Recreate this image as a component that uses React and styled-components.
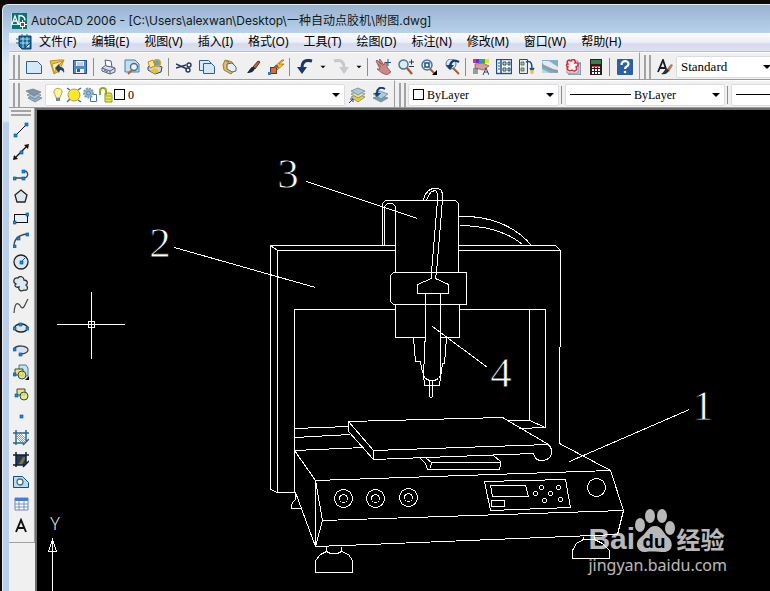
import React from "react";
import styled, { createGlobalStyle, css } from "styled-components";

const GlobalStyle = createGlobalStyle`
  * { box-sizing: border-box; }
  body { margin: 0; background: #0d0a07; font-family: "Inter", "Noto Sans CJK SC", sans-serif; }
  button, select { font: inherit; color: inherit; margin: 0; }
`;

const Desktop = styled.div`
  min-height: 100vh;
  padding: 4px 0 0 2px;
  display: flex;
  overflow: hidden;
`;

const AppWindow = styled.main`
  flex: 1;
  min-width: 0;
  display: flex;
  flex-direction: column;
  overflow: hidden;
  border-top: 1px solid #e4eef8;
  border-left: 1px solid #e4eef8;
  border-top-left-radius: 6px;
  background: linear-gradient(#99b4d1 0, #b9d1ea 28px, #dfe9f5 60px, #dfe9f5 116px, #bad0ea 118px);
`;

const TitleBar = styled.header`
  display: flex;
  align-items: center;
  gap: 4px;
  height: 28px;
  padding: 3px 8px 0;
  color: #101820;
  white-space: nowrap;
`;

const Title = styled.h1`
  margin: 0;
  font-size: 12px;
  font-weight: 400;
  line-height: 18px;
`;

const Client = styled.div`
  flex: 1;
  display: flex;
  flex-direction: column;
  min-width: 0;
  margin-left: 6px;
  background: #f0f0f0;
`;

const MenuBar = styled.nav`
  display: flex;
  align-items: center;
  height: 19px;
  padding-left: 7px;
  font-family: "Noto Sans", "Noto Sans CJK SC", sans-serif;
  background: linear-gradient(#fdfdff, #eceff8 50%, #d5dbee 60%, #dde2f2);
  border-bottom: 1px solid #b8bdcc;
`;

const MenuItem = styled.button`
  border: 0;
  padding: 0 8px 0 7px;
  background: none;
  font-size: 12px;
  line-height: 18px;
  color: #000;
  white-space: nowrap;
`;

const ToolRow = styled.div`
  display: flex;
  height: 28px;
  overflow: hidden;
`;

const Toolbar = styled.div`
  display: flex;
  align-items: center;
  flex: ${(p) => (p.$grow ? "1" : "none")};
  min-width: 0;
  height: 28px;
  padding: ${(p) => (p.$grow ? "1px 0 0 4px" : "1px 3px 0 4px")};
  border-top: 1px solid #fff;
  border-bottom: 1px solid #9c9c9c;
  border-right: ${(p) => (p.$grow ? "0" : "1px solid #9c9c9c")};
`;

const Grip = styled.span`
  flex: none;
  width: 7px;
  height: 24px;
  margin-right: 2px;
  border: solid #a3a3a3;
  border-width: 0 2px;
  ${(p) =>
    p.$horizontal &&
    css`
      width: 20px;
      height: 6px;
      margin: 0 0 3px;
      border-width: 2px 0;
    `}
`;

const ToolButton = styled.button`
  flex: none;
  display: flex;
  align-items: center;
  justify-content: center;
  width: ${(p) => (p.$narrow ? "13px" : "23px")};
  height: 22px;
  padding: 0;
  border: 0;
  background: none;
`;

const Divider = styled.span`
  flex: none;
  width: 2px;
  height: 18px;
  margin: 0 2px;
  border-left: 1px solid #8d8d8d;
`;

const ComboBox = styled.label`
  flex: ${(p) => (p.$width ? "none" : "1 0 60px")};
  display: flex;
  align-items: center;
  width: ${(p) => (p.$width ? p.$width + "px" : "auto")};
  height: 22px;
  padding: 0 0 0 4px;
  background: #fff;
  border: 1px solid #d9dce0;
  border-radius: 2px;
  overflow: hidden;
`;

const ComboSelect = styled.select`
  flex: 1;
  min-width: 0;
  appearance: none;
  border: 0;
  padding: 0;
  margin-left: ${(p) => (p.$plain ? "0" : "3px")};
  background: transparent;
  outline: 0;
  color: #000;
  font-family: "Liberation Serif", serif;
  font-size: ${(p) => (p.$plain ? "13px" : "12px")};
  line-height: 18px;
`;

const Swatch = styled.span`
  flex: none;
  width: 11px;
  height: 11px;
  border: 1px solid #000;
  background: #fff;
`;

const LineSample = styled.span`
  flex: none;
  width: 61px;
  height: 1px;
  background: #000;
`;

const Workspace = styled.div`
  flex: 1;
  display: flex;
`;

const DrawPanel = styled.aside`
  flex: none;
  width: 26px;
  background: #f0f0f0;
`;

const DrawTools = styled.div`
  display: flex;
  flex-direction: column;
  align-items: center;
  padding: 2px 1px 5px 0;
  border-right: 1px solid #a0a0a0;
  border-bottom: 1px solid #a0a0a0;
`;

const Canvas = styled.section`
  position: relative;
  flex: 1;
  min-width: 0;
  overflow: hidden;
  background: #000;
  border-top: 2px solid #6c6c6c;
  border-left: 2px solid #6c6c6c;
`;

const Drawing = styled.svg`
  display: block;
  fill: none;
  stroke: #fff;
  stroke-width: 1;
  shape-rendering: crispEdges;
`;

const Callout = styled.text`
  fill: #fff;
  stroke: #000;
  stroke-width: 0.8;
  font-family: "Liberation Serif", serif;
  font-size: 43px;
  text-anchor: middle;
`;

const AxisLabel = styled.text`
  fill: #fff;
  stroke: none;
  font-family: "Open Sans", sans-serif;
  font-weight: 300;
  font-size: 18px;
  text-anchor: middle;
`;

const Watermark = styled.div`
  position: absolute;
  right: 43px;
  bottom: 15px;
  color: #fff;
  opacity: 0.72;
`;

const Brand = styled.div`
  display: flex;
  align-items: flex-end;
  height: 46px;
`;

const BrandLatin = styled.span`
  width: 46px;
  font-family: "Liberation Sans", sans-serif;
  font-weight: 700;
  font-size: 30px;
  line-height: 31px;
`;

const BrandHan = styled.span`
  font-family: "Noto Sans CJK SC", sans-serif;
  font-weight: 700;
  font-size: 24px;
  line-height: 31px;
  white-space: nowrap;
`;

const Address = styled.div`
  font-family: "Noto Sans", sans-serif;
  font-size: 16px;
  line-height: 22px;
`;

const B = "#1b4f8f";
const Node = ({ x, y }) => <rect x={x - 1} y={y - 1} width="3" height="3" fill="#0a8cf0" stroke="#07508f" strokeWidth=".6" />;

const glyphs = {
  app: <><rect width="16" height="16" fill="#08746c" /><path d="M.5 0v16M0 11.500h16" stroke="#e8ffff" strokeWidth=".8" /><path d="M1 11 4 3l3 8M2 8h4M8 2v9M8 2.500c4 0 6 2 6 5" stroke="#fff" strokeWidth="1.300" fill="none" /><path d="M7 11.500h9M11.500 7v9" stroke="#fff" /><rect x="9.500" y="9.500" width="4" height="4" fill="#08746c" stroke="#fff" /></>,
  doc: <><path d="M3 2v10l3 3h9V2z" fill="#126a9c" stroke="#0d3d61" /><path d="M0 5h3M0 9h3M6 0v3M11 0v3" stroke="#17648d" /><path d="M4 5h10M4 9h10M7 3v11M11 3v11" stroke="#d8f3ff" strokeWidth=".8" /><path d="m9 14 5-5v5z" fill="#c8edff" stroke="#174d76" /></>,
  page: <path d="M.5 2.500h11l4 4v8H.5z" fill="#d4e8f5" stroke="#2c6389" />,
  open: <><path d="m1 2 9-1 5 0-5 11-5 3z" fill="#f4c63c" stroke="#bd8c22" /><path d="m3 5 11-3-6 6-3 6z" fill="#fff0a0" stroke="#c39025" /><path d="m6 9 4-4 1 3c3 0 5 2 4 6-1-2-2-3-4-3l-1 3z" fill="#22436e" /></>,
  save: <><rect x="1.500" y="1.500" width="13" height="13" fill="#578ac6" stroke="#244f8b" /><path d="M4 2h8v5H4zM4 10h8v4H4z" fill="#edf3fa" /><path d="M5 4h6M5 6h6" stroke="#9aafc8" /><path d="M5 10h3v3H5z" fill="#315e9b" /></>,
  print: <><path d="m1 9 4-3 9 3v4l-5 2-8-3z" fill="#d9deeb" stroke="#59617b" /><path d="m4 1 6 1 1 6-6-1z" fill="#fff" stroke="#555e77" /><path d="m1 9 8 3 5-3M9 12v3M3 11l4 2" fill="none" stroke="#59617b" /></>,
  preview: <><path d="M1 1h10l4 4v8H1z" fill="#c4dfef" stroke="#477fa8" /><circle cx="10" cy="8" r="3.500" fill="#e2f3fb" stroke="#506f87" strokeWidth="1.400" /><path d="m8 11-4 4" stroke="#b76137" strokeWidth="2" /></>,
  publish: <><path d="m1 8 6-3 8 3-1 5-6 2-7-4z" fill="#c9d1e4" stroke="#38435e" /><circle cx="10" cy="4" r="3.500" fill="#65a6bd" stroke="#e1a71b" strokeWidth="1.500" /><path d="m1 3 5-2 2 6-5 2z" fill="#ffe884" stroke="#b88822" /><path d="m3 12 5-3 4 3-4 3z" fill="#e9c329" /></>,
  cut: <g fill="none" stroke="#253960" strokeWidth="1.400"><path d="m0 5 11 5M0 9l10-3" /><circle cx="13" cy="6" r="2" /><circle cx="12" cy="11" r="2" /></g>,
  copy: <><path d="M.5 1.500h9l3 3v7H.5z" fill="#d8eaf5" stroke="#286289" /><path d="M4.500 4.500h8l3 3v7h-11z" fill="#d4e8f4" stroke="#286289" /></>,
  paste: <><path d="m3 1 7 2 4 6-5 6-7-4-1-5z" fill="#e4bd5c" stroke="#a5782b" /><path d="m5 5 5-1 4 4v4l-4 1-5-3z" fill="#e5eff6" stroke="#426c8c" /><path d="m4 1 4 1-1 2-3-1z" fill="#9a836a" /></>,
  brush: <><path d="m8 8 5-6 2 1-5 7z" fill="#b0703c" stroke="#50311f" /><path d="M9 8c-3-1-4 3-7 6 4 0 7-1 8-5z" fill="#202633" /></>,
  block: <><rect x="2.500" y="8.500" width="6" height="6" fill="#e6682a" stroke="#31465d" /><path d="m14 1-8 7h5l-3 4 8-7h-5l5-4z" fill="#ffc619" stroke="#9f5b13" strokeWidth=".7" /><path d="M0 13h3v3H0zM7 6h3v3H7z" fill="#3d78bc" /></>,
  undo: <><path d="M15 2C8 0 5 3 5 9" fill="none" stroke="#173967" strokeWidth="3" /><path d="M0 8h10l-5 7z" fill="#173967" /></>,
  redo: <><path d="M1 2c7-2 10 1 10 7" fill="none" stroke="#c6c9cd" strokeWidth="3" /><path d="M6 8h10l-5 7z" fill="#c6c9cd" /></>,
  pan: <><path d="M1 2 2 1l4 4-2-4 1-1 4 6 1-3 2 1 0 4 4 5-4 3-5-2-5-4 3 0z" fill="#c98a86" stroke="#8e5056" strokeWidth=".8" /><path d="m3 5 3 3M6 4l2 3" stroke="#8e5056" strokeWidth=".7" /><path d="M13 0v7M10 3.500h6" stroke="#185894" fill="none" /></>,
  zoom: <><circle cx="5.500" cy="5.500" r="4.500" fill="#d6edf7" stroke="#53748c" strokeWidth="1.500" /><path d="m9 9 5 6" stroke="#a75b30" strokeWidth="2.400" /><path d="M11 3h5M13.500.500v5M11 7.500h5" stroke="#23395a" /></>,
  zoomWindow: <><circle cx="6" cy="6" r="5" fill="#d6edf7" stroke="#53748c" strokeWidth="1.500" /><path d="m9 10 5 5" stroke="#a75b30" strokeWidth="2" /><rect x="4" y="4" width="4" height="4" fill="#fff" stroke="#1b4f8f" strokeWidth="1.500" /><path d="M16 11v5h-5z" fill="#000" /></>,
  zoomPrevious: <><circle cx="7" cy="5" r="5" fill="#d6edf7" stroke="#53748c" /><path d="m9 9 6 6" stroke="#a75b30" strokeWidth="2" /><path d="M15 3c-5-3-8-1-9 4" fill="none" stroke="#183c70" strokeWidth="2.400" /><path d="M2 6h8l-4 5z" fill="#183c70" /></>,
  properties: <><path d="M0 0h3v4H0z" fill="#f0218b" /><path d="M3 0h3v4H3z" fill="#6b2ae2" /><path d="M6 0h3v4H6z" fill="#149ee6" /><path d="M9 0h3v4H9z" fill="#20b93c" /><path d="M12 0h4v4h-4z" fill="#f2db29" /><path d="m2 5 8-1 6 3-6 4-8-2z" fill="#db9a94" stroke="#884e50" strokeWidth=".7" /><path d="M0 10h5M0 12h5M0 14h5M10 16l3-7 3 7m-5-3h4" fill="none" stroke="#34465d" /></>,
  center: <><rect x=".5" y=".5" width="15" height="14" fill="#fff" stroke={B} strokeWidth="1.400" /><path d="M5 1v13" stroke={B} strokeWidth="1.500" /><path d="M2 4h2M2 7h2M2 10h2" stroke={B} /><path d="M7 3h3v3H7zm5 0h2v3h-2zM7 9h3v3H7zm5 0h2v3h-2z" fill="#f2d454" stroke={B} /></>,
  palette: <><path d="M.5.500h8v14h-8z" fill="#dfedf8" stroke={B} /><path d="M2 3h3v3H2zm0 6h3v3H2z" fill="#e9b935" stroke="#285078" strokeWidth=".7" /><path d="M7 3c6-2 6 3 6 8m-2-2 2 3 2-3" fill="none" stroke={B} strokeWidth="1.500" /><circle cx="13" cy="13" r="2" fill="#e8c447" /></>,
  sheet: <><path d="M0 1h16v13H0z" fill="#7fb0cb" /><path d="M0 2h7l9 6v5l-5-1-9-5z" fill="#e4ebed" /><path d="m0 5 11 5 5 1v3L8 12 0 8z" fill="#8c9ca6" /><path d="m0 10 8 4H0z" fill="#b9d8e6" /></>,
  markup: <><path d="M4 4h12v12H4z" fill="#b9c5d8" stroke="#65758f" /><path d="M2 2h11v12H2z" fill="#fff" stroke="#8995aa" /><path d="M3 5c-2-3 1-5 3-3 2-3 5-1 4 2 4-1 4 3 1 4 2 4-2 5-4 3-3 2-6-1-4-3-2-1-2-3 0-3z" fill="#fff4f4" stroke="#e62735" strokeWidth="1.500" /></>,
  calc: <><rect x="2" width="12" height="16" fill="#242020" /><rect x="3" y="1" width="10" height="4" fill="#377e4d" /><path d="M4 7h2v2H4zm3 0h2v2H7zm3 0h2v2h-2zM4 10h2v2H4zm3 0h2v2H7zm3 0h2v2h-2zM4 13h2v2H4zm3 0h2v2H7zm3 0h2v2h-2z" fill="#fff" /><path d="M4 7h8v1H4z" fill="#ed363d" /></>,
  help: <><rect width="16" height="16" rx="1" fill="#2c609e" /><path d="M4.500 6c0-5 7-5 7-1 0 3-3.500 2-3.500 5" fill="none" stroke="#fff" strokeWidth="2.200" /><circle cx="8" cy="13" r="1.300" fill="#fff" /></>,
  style: <><path d="M1 13 6 1l4 12M3 9h6" fill="none" stroke="#161c26" strokeWidth="1.800" /><path d="m9 11 5-6 2 1-4 7z" fill="#bb7c4a" /><path d="M10 10c-3 0-3 4-6 5 5 1 7-1 8-4z" fill="#26313b" /></>,
  layers: <g stroke="#687a8d" strokeWidth=".7"><path d="m2 11 6-3 8 3-7 4z" fill="#8fb0c6" /><path d="m1 8 7-3 7 3-6 4z" fill="#a9c2d2" /><path d="m0 4 7-2 8 3-7 4z" fill="#8494a3" /></g>,
  layerCurrent: <><g stroke="#657d90" strokeWidth=".7"><path d="m2 10 7-3 7 3-7 5z" fill="#eccc31" /><path d="m2 7 7-3 7 3-7 4z" fill="#e6e29a" /><path d="m2 4 7-3 7 3-7 4z" fill="#a9c9db" /></g><path d="m0 16 4-4M1 12h3v3" fill="none" stroke="#174883" /></>,
  layerPrevious: <><g stroke="#657d90" strokeWidth=".7"><path d="m1 11 7-3 8 3-7 4z" fill="#7e9cb0" /><path d="m1 7 7-3 8 3-7 5z" fill="#aacbdd" /></g><path d="M13 2C8-1 5 2 5 6" fill="none" stroke="#193e6f" strokeWidth="2" /><path d="M2 6h7l-4 4z" fill="#193e6f" /></>,
  bulb: <><path d="M6 11c0-3-2-3-2-6 0-5 8-5 8 0 0 3-2 3-2 6z" fill="#fff5a8" stroke="#bd9c24" /><path d="M6 11h4v3H6z" fill="#7086a8" /></>,
  sun: <><path d="m1 1 3 2m8 10 3 2M1 15l3-3m8-9 3-2" stroke="#3271ae" strokeWidth="1.500" /><circle cx="8" cy="8" r="6" fill="#fde72d" stroke="#b19b34" /></>,
  viewport: <><path d="M8.500 7.500h6v7h-6z" fill="#fff" stroke="#407bad" /><circle cx="6.500" cy="6" r="4.500" fill="#9fbdd2" stroke="#7c9bb5" strokeDasharray="2 1" strokeWidth="2" /><circle cx="6.500" cy="6" r="2" fill="none" stroke="#5984a4" /></>,
  lock: <><path d="M7 6h6l1 2v7H7z" fill="#efed45" stroke="#8d9520" /><path d="M8 9h5M8 12h5" stroke="#9ca231" /><path d="M2 8V4c0-4 6-4 6 0v4" fill="none" stroke="#97a822" strokeWidth="2" /></>,
  arrow: <path d="M4 6h8l-4 4z" fill="#000" />,
  line: <><path d="m2 14 12-12" stroke="#111" /><Node x="2" y="13" /><Node x="13" y="2" /></>,
  ray: <><path d="M2 14 14 2" stroke="#111" strokeWidth="1.300" /><path d="m0 16 1-5 4 4zM11 1l5-1-1 5z" fill="#111" /><Node x="8" y="8" /></>,
  pline: <><path d="M1 12h10c6-1 4-8-1-7" fill="none" stroke="#444" strokeWidth="1.300" /><Node x="1" y="12" /><Node x="10" y="12" /><Node x="10" y="5" /></>,
  polygon: <path d="m8 2 6 5-2 7H4L2 7z" fill="#dce8f0" stroke="#222" strokeWidth="1.300" />,
  rect: <><rect x="1.500" y="4.500" width="13" height="8" fill="#e5eff5" stroke="#111" /><Node x="1" y="12" /><Node x="14" y="4" /></>,
  arc: <><path d="M1 14C1 6 6 3 14 2" fill="none" stroke="#444" strokeWidth="1.300" /><Node x="1" y="14" /><Node x="5" y="6" /><Node x="14" y="2" /></>,
  circle: <><circle cx="8" cy="8" r="7" fill="#dae8f3" stroke="#222" strokeWidth="1.300" /><path d="m8 8 4-4" stroke="#165f9d" /><Node x="8" y="8" /></>,
  cloud: <path d="M3 8C-1 6 1 1 5 2c2-3 6-1 6 2 4 0 4 4 2 5 3 3 1 6-2 5-3 2-6 0-5-3-4 1-5-2-3-3z" fill="#dbe9f2" stroke="#333" strokeWidth="1.300" />,
  spline: <path d="M1 15C2 0 7 7 8 9c3 3 4-3 7-8" fill="none" stroke="#444" strokeWidth="1.200" />,
  ellipse: <><ellipse cx="8" cy="8" rx="6.500" ry="4" fill="#dae7ef" stroke="#222" strokeWidth="1.300" /><Node x="1" y="8" /><Node x="14" y="8" /><Node x="7" y="4" /></>,
  ellipseArc: <><path d="M1 7c3-5 14-3 14 1 0 2-3 4-7 4" fill="#d7e4ed" stroke="#444" strokeWidth="1.300" /><Node x="1" y="7" /><Node x="7" y="12" /></>,
  insert: <><path d="M6 1h7l2 3v8H6z" fill="#c9dfed" stroke="#497b9b" /><path d="M2 5h8v6H2z" fill="#f4e65d" stroke="#294d65" /><circle cx="9" cy="11" r="4" fill="#eee66c" fillOpacity=".8" stroke="#294d65" /><Node x="1" y="10" /><path d="M16 12v4h-4z" /></>,
  make: <><path d="M4 3h8v6H4z" fill="#f1e561" stroke="#294d65" /><circle cx="11" cy="10" r="4" fill="#eee66c" fillOpacity=".8" stroke="#294d65" /><Node x="3" y="9" /></>,
  point: <Node x="8" y="8" />,
  hatch: <><path d="M3 3h10v10H3z" fill="#f9fcff" /><path d="m4 4 8 8M4 8l4 4M8 4l4 4M4 6l6 6M6 4l6 6" stroke="#317ca9" strokeWidth=".7" /><path d="M3 0v15M13 0v11M0 3h16M0 13h11M10 15l6-6" stroke="#256596" strokeWidth="1.500" /></>,
  gradient: <><path d="M3 3h10v10H3z" fill="#233a58" /><path d="M10 5h3l-4 8H5z" fill="#79733e" /><path d="M3 0v15M13 0v11M0 3h16M0 13h11M10 15l6-6" stroke="#0c203a" strokeWidth="1.500" /></>,
  region: <><path d="M.5 2.500h9l6 6v5H.5z" fill="#b8dcf0" stroke="#164c78" /><circle cx="7" cy="8" r="3" fill="#fff" stroke="#476f93" strokeWidth="1.300" /></>,
  table: <><path d="M2 2h13v12H2z" fill="#fff" stroke="#6388bf" /><path d="M2 2h13v3H2z" fill="#467bd7" /><path d="M6 5v9M11 5v9M2 8h13M2 11h13" stroke="#7892b8" /></>,
  text: <path d="m3 14 5-12 5 12M4 10h8" fill="none" stroke="#111" strokeWidth="1.900" />,
};

const Icon = ({ name, size = 16 }) => (
  <svg width={size} height={size} viewBox="0 0 16 16" aria-hidden="true">{glyphs[name]}</svg>
);

const standardTools = [
  "page:新建", "open:打开", "save:保存", "|", "print:打印", "preview:打印预览", "publish:发布", "|",
  "cut:剪切", "copy:复制", "paste:粘贴", "brush:特性匹配", "block:块编辑器", "|",
  "undo:放弃", "arrow:放弃列表", "redo:重做", "arrow:重做列表", "|",
  "pan:平移", "zoom:实时缩放", "zoomWindow:窗口缩放", "zoomPrevious:缩放上一个", "|",
  "properties:特性", "center:设计中心", "palette:工具选项板", "sheet:图纸集", "markup:标记集", "calc:计算器", "|",
  "help:帮助",
];

const drawTools = [
  "line:直线", "ray:构造线", "pline:多段线", "polygon:正多边形", "rect:矩形", "arc:圆弧", "circle:圆",
  "cloud:修订云线", "spline:样条曲线", "ellipse:椭圆", "ellipseArc:椭圆弧", "insert:插入块", "make:创建块",
  "point:点", "hatch:图案填充", "gradient:渐变色", "region:面域", "table:表格", "text:多行文字",
];

const menus = ["文件(F)", "编辑(E)", "视图(V)", "插入(I)", "格式(O)", "工具(T)", "绘图(D)", "标注(N)", "修改(M)", "窗口(W)", "帮助(H)"];

const Tools = ({ items }) =>
  items.map((item, i) => {
    if (item === "|") return <Divider key={i} />;
    const [name, label] = item.split(":");
    return (
      <ToolButton key={i} $narrow={name === "arrow"} aria-label={label}>
        <Icon name={name} size={name === "arrow" ? 10 : 16} />
      </ToolButton>
    );
  });

const Combo = ({ label, value, width, children }) => (
  <ComboBox $width={width}>
    {children}
    <ComboSelect $plain={!children} aria-label={label} defaultValue={value}><option>{value}</option></ComboSelect>
    <Icon name="arrow" />
  </ComboBox>
);

const Machine = () => (
  <g>
    {/* gantry frame */}
    <path d="M395 245H270V489L277 492H295M395 250H277V492M270 245L277 250M458 245H555L560 250H458M560 250V346L559 347V443L610 470" />
    <path d="M395 309H294V492M459 309H545V427L519 428M529 309V420M507 420H529L545 427" />
    {/* spindle head and cable */}
    <path d="M382 245V203L385 200H455L458 203V272M384 245V206L387 203H392L395 206V272" />
    <path d="M423 200L424 195L428 190L432 188H438L441 190L442 194V199L436 272L435 278L448 284V293H417V284L431 278V272L437 200V193L435 190L431 191L428 195L426 200" />
    <path d="M459 216C490 215 515 226 531 245M459 225C482 225 505 230 522 244" />
    <path d="M393 272H466V304H393L390 301V275ZM395 304V337H424M440 337H459V304" />
    <path d="M425 293V330L423 375L425 378L429 380H434L438 378L440 375L440 293" />
    <path d="M413 337L415 361H420L421 368L423 374L424 385H439L440 377L442 363H444L446 337M429 380V396L430 397H431L432 396V380" />
    {/* work table and rails */}
    <path d="M348 421L502 417L548 444L373 450ZM348 421V431L373 459V450M373 459L533 453C534 458 537 460 541 460C548 460 551 456 551 451C551 447 549 445 547 444" />
    <path d="M294 428L348 426M294 437L350 434M294 450L364 447" />
    <path d="M420 458L425 463L427 469H499L500 465V461L493 455M426 458L431 462L430 468M431 462H500" />
    {/* base */}
    <path d="M294 450L315 480L610 470L623 510L322 520L315 480V546L322 520M315 546L343 545L617 534L623 510M295 492L315 546M295 492V499L292 502L291 505V508H301" />
    <circle cx="343" cy="498" r="9" /><circle cx="343" cy="498" r="4" />
    <circle cx="375" cy="498" r="9" /><circle cx="375" cy="498" r="4" />
    <circle cx="408" cy="497" r="9" /><circle cx="408" cy="497" r="4" />
    <path d="M484 481L565 479L570 507L490 510ZM490 485H525L528 496H492ZM491 500H504V506H491Z" />
    {[[541, 487], [558, 487], [535, 493], [550, 493], [544, 500], [560, 499]].map(([x, y]) => (
      <circle key={x} cx={x} cy={y} r="2" />
    ))}
    <circle cx="596" cy="487" r="9" />
    {/* feet */}
    <path d="M326 546V551L320 554L315 560V572H352V560L348 554L341 551V546M326 551L330 553H337L341 551" />
    <path d="M583 536V539H594V535M583 539L576 543L572 550V558H609V550L602 543L594 539" />
  </g>
);

export default function App() {
  return (
    <Desktop>
      <GlobalStyle />
      <AppWindow>
        <TitleBar>
          <Icon name="app" />
          <Title>AutoCAD 2006 - [C:\Users\alexwan\Desktop\一种自动点胶机\附图.dwg]</Title>
        </TitleBar>
        <Client>
          <MenuBar>
            <Icon name="doc" />
            {menus.map((m) => <MenuItem key={m}>{m}</MenuItem>)}
          </MenuBar>
          <ToolRow>
            <Toolbar>
              <Grip />
              <Tools items={standardTools} />
            </Toolbar>
            <Toolbar $grow>
              <Grip />
              <Tools items={["style:文字样式"]} />
              <Combo label="文字样式" value="Standard" width={100} />
            </Toolbar>
          </ToolRow>
          <ToolRow>
            <Toolbar>
              <Grip />
              <Tools items={["layers:图层特性管理器"]} />
              <Combo label="图层" value="0" width={300}>
                <Icon name="bulb" /><Icon name="sun" /><Icon name="viewport" /><Icon name="lock" /><Swatch />
              </Combo>
              <Tools items={["layerCurrent:置为当前", "layerPrevious:上一个图层"]} />
            </Toolbar>
            <Toolbar $grow>
              <Grip />
              <Combo label="颜色" value="ByLayer" width={151}><Swatch /></Combo>
              <Divider />
              <Combo label="线型" value="ByLayer" width={160}><LineSample /></Combo>
              <Divider />
              <Combo label="线宽" value="ByLayer"><LineSample /></Combo>
            </Toolbar>
          </ToolRow>
          <Workspace>
            <DrawPanel>
              <DrawTools>
                <Grip $horizontal />
                <Tools items={drawTools} />
              </DrawTools>
            </DrawPanel>
            <Canvas>
              <Drawing width="733" height="481" viewBox="37 110 733 481">
                <g transform="translate(0.5 0.5)">
                  <Machine />
                  <path d="M306 181L417 218M174 247L315 287M432 326L487 367M569 461L689 409" />
                  <path d="M56 324H124M91 291V358M88 321H94V327H88Z" />
                  <path d="M52 539L48 551H56ZM52 539V591" />
                </g>
                <Callout x="288" y="188">3</Callout>
                <Callout x="160" y="257">2</Callout>
                <Callout x="501" y="387">4</Callout>
                <Callout x="703" y="420">1</Callout>
                <AxisLabel x="55" y="530">Y</AxisLabel>
              </Drawing>
              <Watermark>
                <Brand>
                  <BrandLatin>Bai</BrandLatin>
                  <svg width="42" height="46" viewBox="0 0 42 46" fill="#fff" aria-label="du">
                    <ellipse cx="6" cy="17" rx="5" ry="7" />
                    <ellipse cx="16" cy="8" rx="5" ry="7" />
                    <ellipse cx="28" cy="8" rx="5" ry="7" />
                    <ellipse cx="36" cy="20" rx="5" ry="7" />
                    <path d="M21 18c7 0 8 7 13 11 6 5 5 15-4 15-4 0-14-1-18 0C3 45 0 35 6 30c6-4 8-12 15-12z" />
                    <text x="20" y="40" textAnchor="middle" fill="#000" fontFamily="Open Sans, sans-serif" fontWeight="700" fontSize="18">du</text>
                  </svg>
                  <BrandHan>经验</BrandHan>
                </Brand>
                <Address>jingyan.baidu.com</Address>
              </Watermark>
            </Canvas>
          </Workspace>
        </Client>
      </AppWindow>
    </Desktop>
  );
}
